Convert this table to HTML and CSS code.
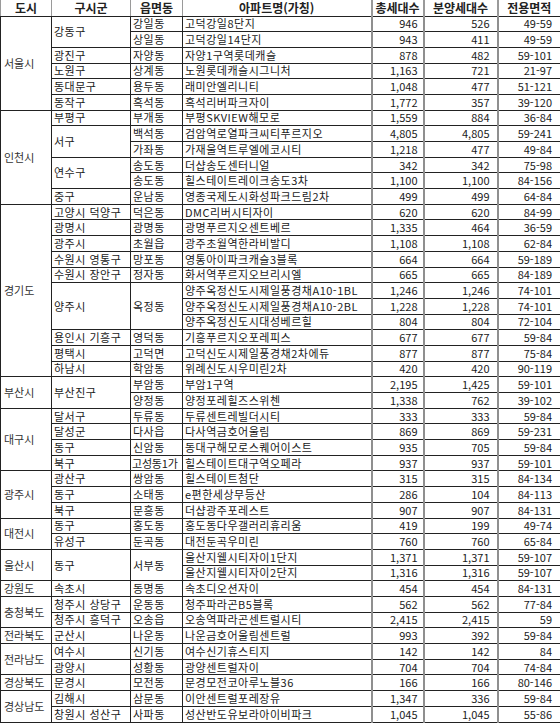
FILE: index.html
```html
<!DOCTYPE html>
<html lang="ko">
<head>
<meta charset="utf-8">
<title>분양 단지 목록</title>
<link rel="stylesheet" href="styles.css">
</head>
<body>
<table class="apt">
<colgroup>
<col class="c-city"><col class="c-gu"><col class="c-dong"><col class="c-name"><col class="c-tot"><col class="c-sale"><col class="c-area">
</colgroup>
<thead>
<tr class="hd"><th>도시</th><th>구시군</th><th>읍면동</th><th>아파트명(가칭)</th><th class="n">총세대수</th><th class="n">분양세대수</th><th class="n">전용면적</th></tr>
</thead>
<tbody>
<tr><td class="city" rowspan="6">서울시</td><td rowspan="2">강동구</td><td>강일동</td><td>고덕강일8단지</td><td class="n t">946</td><td class="n s">526</td><td class="n a">49-59</td></tr>
<tr><td>상일동</td><td>고덕강일14단지</td><td class="n t">943</td><td class="n s">411</td><td class="n a">49-59</td></tr>
<tr><td>광진구</td><td>자양동</td><td>자양1구역롯데캐슬</td><td class="n t">878</td><td class="n s">482</td><td class="n a">59-101</td></tr>
<tr><td>노원구</td><td>상계동</td><td>노원롯데캐슬시그니처</td><td class="n t">1,163</td><td class="n s">721</td><td class="n a">21-97</td></tr>
<tr><td>동대문구</td><td>용두동</td><td>래미안엘리니티</td><td class="n t">1,048</td><td class="n s">477</td><td class="n a">51-121</td></tr>
<tr><td>동작구</td><td>흑석동</td><td>흑석리버파크자이</td><td class="n t">1,772</td><td class="n s">357</td><td class="n a">39-120</td></tr>
<tr><td class="city" rowspan="6">인천시</td><td>부평구</td><td>부개동</td><td>부평SKVIEW해모로</td><td class="n t">1,559</td><td class="n s">884</td><td class="n a">36-84</td></tr>
<tr><td rowspan="2">서구</td><td>백석동</td><td>검암역로열파크씨티푸르지오</td><td class="n t">4,805</td><td class="n s">4,805</td><td class="n a">59-241</td></tr>
<tr><td>가좌동</td><td>가재울역트루엘에코시티</td><td class="n t">1,218</td><td class="n s">477</td><td class="n a">49-84</td></tr>
<tr><td rowspan="2">연수구</td><td>송도동</td><td>더샵송도센터니얼</td><td class="n t">342</td><td class="n s">342</td><td class="n a">75-98</td></tr>
<tr><td>송도동</td><td>힐스테이트레이크송도3차</td><td class="n t">1,100</td><td class="n s">1,100</td><td class="n a">84-156</td></tr>
<tr><td>중구</td><td>운남동</td><td>영종국제도시화성파크드림2차</td><td class="n t">499</td><td class="n s">499</td><td class="n a">64-84</td></tr>
<tr><td class="city" rowspan="11">경기도</td><td>고양시 덕양구</td><td>덕은동</td><td>DMC리버시티자이</td><td class="n t">620</td><td class="n s">620</td><td class="n a">84-99</td></tr>
<tr><td>광명시</td><td>광명동</td><td>광명푸르지오센트베르</td><td class="n t">1,335</td><td class="n s">464</td><td class="n a">36-59</td></tr>
<tr><td>광주시</td><td>초월읍</td><td>광주초월역한라비발디</td><td class="n t">1,108</td><td class="n s">1,108</td><td class="n a">62-84</td></tr>
<tr><td>수원시 영통구</td><td>망포동</td><td>영통아이파크캐슬3블록</td><td class="n t">664</td><td class="n s">664</td><td class="n a">59-189</td></tr>
<tr><td>수원시 장안구</td><td>정자동</td><td>화서역푸르지오브리시엘</td><td class="n t">665</td><td class="n s">665</td><td class="n a">84-189</td></tr>
<tr><td rowspan="3">양주시</td><td rowspan="3">옥정동</td><td>양주옥정신도시제일풍경채A10-1BL</td><td class="n t">1,246</td><td class="n s">1,246</td><td class="n a">74-101</td></tr>
<tr><td>양주옥정신도시제일풍경채A10-2BL</td><td class="n t">1,228</td><td class="n s">1,228</td><td class="n a">74-101</td></tr>
<tr><td>양주옥정신도시대성베르힐</td><td class="n t">804</td><td class="n s">804</td><td class="n a">72-104</td></tr>
<tr><td>용인시 기흥구</td><td>영덕동</td><td>기흥푸르지오포레피스</td><td class="n t">677</td><td class="n s">677</td><td class="n a">59-84</td></tr>
<tr><td>평택시</td><td>고덕면</td><td>고덕신도시제일풍경채2차에듀</td><td class="n t">877</td><td class="n s">877</td><td class="n a">75-84</td></tr>
<tr><td>하남시</td><td>학암동</td><td>위례신도시우미린2차</td><td class="n t">420</td><td class="n s">420</td><td class="n a">90-119</td></tr>
<tr><td class="city" rowspan="2">부산시</td><td rowspan="2">부산진구</td><td>부암동</td><td>부암1구역</td><td class="n t">2,195</td><td class="n s">1,425</td><td class="n a">59-101</td></tr>
<tr><td>양정동</td><td>양정포레힐즈스위첸</td><td class="n t">1,338</td><td class="n s">762</td><td class="n a">39-102</td></tr>
<tr><td class="city" rowspan="4">대구시</td><td>달서구</td><td>두류동</td><td>두류센트레빌더시티</td><td class="n t">333</td><td class="n s">333</td><td class="n a">59-84</td></tr>
<tr><td>달성군</td><td>다사읍</td><td>다사역금호어울림</td><td class="n t">869</td><td class="n s">869</td><td class="n a">59-231</td></tr>
<tr><td>동구</td><td>신암동</td><td>동대구해모로스퀘어이스트</td><td class="n t">935</td><td class="n s">705</td><td class="n a">59-84</td></tr>
<tr><td>북구</td><td class="tight">고성동1가</td><td>힐스테이트대구역오페라</td><td class="n t">937</td><td class="n s">937</td><td class="n a">59-101</td></tr>
<tr><td class="city" rowspan="3">광주시</td><td>광산구</td><td>쌍암동</td><td>힐스테이트첨단</td><td class="n t">315</td><td class="n s">315</td><td class="n a">84-134</td></tr>
<tr><td>동구</td><td>소태동</td><td>e편한세상무등산</td><td class="n t">286</td><td class="n s">104</td><td class="n a">84-113</td></tr>
<tr><td>북구</td><td>문흥동</td><td>더샵광주포레스트</td><td class="n t">907</td><td class="n s">907</td><td class="n a">84-131</td></tr>
<tr><td class="city" rowspan="2">대전시</td><td>동구</td><td>홍도동</td><td>홍도동다우갤러리휴리움</td><td class="n t">419</td><td class="n s">199</td><td class="n a">49-74</td></tr>
<tr><td>유성구</td><td>둔곡동</td><td>대전둔곡우미린</td><td class="n t">760</td><td class="n s">760</td><td class="n a">65-84</td></tr>
<tr><td class="city" rowspan="2">울산시</td><td rowspan="2">동구</td><td rowspan="2">서부동</td><td>울산지웰시티자이1단지</td><td class="n t">1,371</td><td class="n s">1,371</td><td class="n a">59-107</td></tr>
<tr><td>울산지웰시티자이2단지</td><td class="n t">1,316</td><td class="n s">1,316</td><td class="n a">59-107</td></tr>
<tr><td class="city">강원도</td><td>속초시</td><td>동명동</td><td>속초디오션자이</td><td class="n t">454</td><td class="n s">454</td><td class="n a">84-131</td></tr>
<tr><td class="city" rowspan="2">충청북도</td><td>청주시 상당구</td><td>운동동</td><td>청주파라곤B5블록</td><td class="n t">562</td><td class="n s">562</td><td class="n a">77-84</td></tr>
<tr><td>청주시 흥덕구</td><td>오송읍</td><td>오송역파라곤센트럴시티</td><td class="n t">2,415</td><td class="n s">2,415</td><td class="n a">59</td></tr>
<tr><td class="city">전라북도</td><td>군산시</td><td>나운동</td><td>나운금호어울림센트럴</td><td class="n t">993</td><td class="n s">392</td><td class="n a">59-84</td></tr>
<tr><td class="city" rowspan="2">전라남도</td><td>여수시</td><td>신기동</td><td>여수신기휴스티지</td><td class="n t">142</td><td class="n s">142</td><td class="n a">84</td></tr>
<tr><td>광양시</td><td>성황동</td><td>광양센트럴자이</td><td class="n t">704</td><td class="n s">704</td><td class="n a">74-84</td></tr>
<tr><td class="city">경상북도</td><td>문경시</td><td>모전동</td><td>문경모전코아루노블36</td><td class="n t">166</td><td class="n s">166</td><td class="n a">80-146</td></tr>
<tr><td class="city" rowspan="2">경상남도</td><td>김해시</td><td>삼문동</td><td>이안센트럴포레장유</td><td class="n t">1,347</td><td class="n s">336</td><td class="n a">59-84</td></tr>
<tr><td>창원시 성산구</td><td>사파동</td><td>성산반도유보라아이비파크</td><td class="n t">1,045</td><td class="n s">1,045</td><td class="n a">55-86</td></tr>
</tbody>
</table>
</body>
</html>
```
FILE: styles.css
```css
html, body {
  margin: 0;
  padding: 0;
  background: #ffffff;
}

.apt {
  width: 560px;
  height: 723px;
  table-layout: fixed;
  border-collapse: collapse;
  font-family: "Noto Sans CJK KR", "Noto Sans", sans-serif;
  font-size: 11px;
  line-height: 13px;
  color: #1a1a1a;
}

.c-city { width: 51px; }
.c-gu { width: 79px; }
.c-dong { width: 52px; }
.c-name { width: 189px; }
.c-tot { width: 52px; }
.c-sale { width: 74px; }
.c-area { width: 63px; }

.apt th,
.apt td {
  padding: 0 0 0 2px;
  border: 1px solid #222222;
  white-space: nowrap;
  overflow: hidden;
  vertical-align: middle;
  text-align: left;
  letter-spacing: 0.5px;
}

.apt td.tight {
  letter-spacing: -0.2px;
  padding-left: 1px;
}

.apt tbody tr {
  height: 15.7px;
}

.apt .hd {
  height: 16px;
}

.apt th {
  font-weight: 700;
  font-size: 12px;
  text-align: center;
  padding: 0;
  letter-spacing: 0;
  border-top: none;
  border-left: 1px solid #9a9a9a;
  border-right: 1px solid #9a9a9a;
  border-bottom: 1px solid #222222;
  color: #222222;
}

.apt th.n {
  border-left: 2px solid #9a9a9a;
}

.apt td.city {
  padding-left: 3px;
  letter-spacing: 0;
  color: #333333;
}

.apt td.n {
  text-align: right;
  letter-spacing: 0;
  border-left: 2px solid #8f8f8f;
  border-right: 2px solid #8f8f8f;
}

.apt td.t { padding-right: 5px; }
.apt td.s { padding-right: 7px; }
.apt td.a {
  padding-right: 8px;
  border-right: 1px solid #333333;
}
```
